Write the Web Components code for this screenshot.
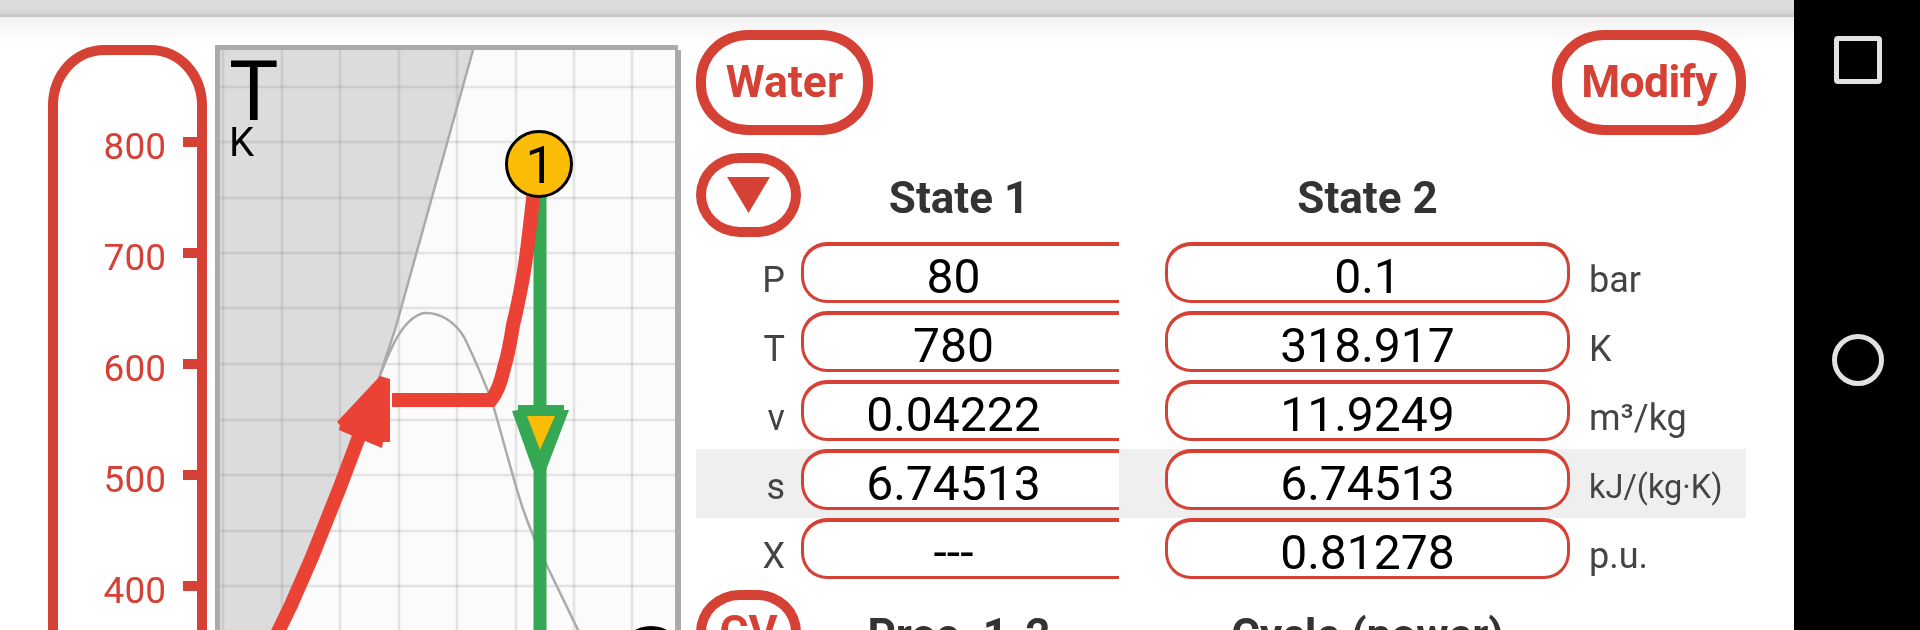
<!DOCTYPE html>
<html><head><meta charset="utf-8">
<style>
html,body{margin:0;padding:0;height:630px;overflow:hidden;background:#fff;font-family:Roboto,sans-serif}
</style></head>
<body>
<app-shell>
  <axis-scale slot="axis"></axis-scale>
  <ts-chart slot="chart"></ts-chart>
  <state-panel slot="panel"></state-panel>
</app-shell>
<script>
const RED='#d54135';
class AppShell extends HTMLElement{constructor(){super();this.attachShadow({mode:'open'}).innerHTML=`<style>
:host{display:flex;width:1920px;height:630px;overflow:hidden;background:#fff}
.main{flex:1;display:flex;flex-direction:column;position:relative;min-width:0}
.bar{height:17px;flex:none;box-sizing:border-box;background:#dcdcdc;border-bottom:2px solid #c6c6c6;background-image:linear-gradient(#dcdcdc 60%,#d0d0d0)}
.shade{position:absolute;left:0;right:0;top:17px;height:26px;background:linear-gradient(#f2f2f2,#ffffff)}
.content{position:relative;flex:1;display:flex;align-items:flex-start;padding:13px 0 0 48px;min-height:0;filter:blur(.45px)}
</style>
<div class="main"><div class="bar"></div><div class="shade"></div>
<div class="content"><slot name="axis"></slot><slot name="chart"></slot><slot name="panel"></slot></div></div>
<nav-rail></nav-rail>`}}
class NavRail extends HTMLElement{constructor(){super();this.attachShadow({mode:'open'}).innerHTML=`<style>
:host{display:flex;flex:none;width:126px;height:630px;background:#000;flex-direction:column;align-items:center;box-sizing:border-box;padding:36px 0 0 1px}
.sq{width:48px;height:48px;box-sizing:border-box;border:5px solid #e2e2e2;border-radius:4px}
.ci{width:52px;height:52px;box-sizing:border-box;border:5px solid #e2e2e2;border-radius:50%;margin-top:250px}
</style><div class="sq"></div><div class="ci"></div>`}}
class AxisScale extends HTMLElement{constructor(){super();const t=[800,700,600,500,400];this.attachShadow({mode:'open'}).innerHTML=`<style>
:host{display:block;flex:none;width:159px;height:640px;margin:15px 8px 0 0;box-sizing:border-box;border:10px solid ${RED};border-bottom:none;border-radius:56px 56px 0 0/60px 60px 0 0;padding-top:31.5px}
.r{height:111px;display:flex;justify-content:flex-end;align-items:center;color:${RED};font:37px/60px Roboto,sans-serif}
.r span{margin-top:10px}
.r i{display:block;width:14px;height:10px;background:${RED};margin-left:17px}
</style>${t.map(v=>`<div class="r"><span>${v}</span><i></i></div>`).join('')}`}}
class TsChart extends HTMLElement{constructor(){super();
const vx=[223,282,340,399,457,516,574,632],hy=[87,142,198,253,308,364,420,475,531,586];
this.attachShadow({mode:'open'}).innerHTML=`<style>
:host{display:block;flex:none;width:466px;height:600px;margin:15px 15px 0 0}
svg{display:block;overflow:visible}
text{font-family:Roboto,sans-serif}
</style>
<svg width="466" height="585" viewBox="215 45 466 585">
<rect x="215" y="45" width="466" height="585" fill="#fbfbfb"/>
<path d="M219 50H473L395 330L380 377L358 440L340 487L312 557L291 605L278 630H219Z" fill="#dcdcdc"/>
<g stroke="#8f8f8f" stroke-opacity=".22" stroke-width="2.500">
${vx.map(x=>`<line x1="${x}" y1="50" x2="${x}" y2="630"/>`).join('')}
${hy.map(y=>`<line x1="219" y1="${y}" x2="675" y2="${y}"/>`).join('')}
</g>
<path d="M473 50L395 330L379 378" fill="none" stroke="#aaa" stroke-width="2.5"/>
<path d="M379 378C390 350 402 318 424 313C440 312 455 322 464 337C478 365 485 385 491 398C502 435 512 475 522 506C530 530 540 552 549 570L580 634" fill="none" stroke="#aaa" stroke-width="2.5"/>
<path d="M217.500 630V47.500H678" fill="none" stroke="#aaa" stroke-width="5"/>
<rect x="675" y="50" width="6" height="580" fill="#aaa"/>
<rect x="533.500" y="164" width="13" height="466" fill="#34a853"/>
<path d="M518 405H564V410H569L546 470H533L512 411L518 410Z" fill="#34a853"/>
<path d="M527 416H555L540 450Z" fill="#fbbc05"/>
<path d="M535 175L533 199C530 225 528 245 525 265C521 290 518 305 513 325C510 345 507 358 504 368C501 382 497 393 491 400H392" fill="none" stroke="#ea4335" stroke-width="14"/>
<path d="M337 422L380 376L390 379V442H383L382 448L353 436L339 430L340 425Z" fill="#ea4335"/>
<path d="M360 434L340 487L312 557L291 605L276 636" fill="none" stroke="#ea4335" stroke-width="14"/>
<circle cx="539" cy="164" r="32.500" fill="#fbbc05" stroke="#000" stroke-width="3"/>
<text x="540" y="183" text-anchor="middle" font-size="52">1</text>
<circle cx="651" cy="660" r="31" fill="#fbbc05" stroke="#000" stroke-width="6"/>
<text x="229" y="120" font-size="83">T</text>
<text x="229" y="156" font-size="40">K</text>
</svg>`}}
class RedBtn extends HTMLElement{constructor(){super();this.attachShadow({mode:'open'}).innerHTML=`<style>
:host{display:inline-flex;box-sizing:border-box;height:var(--h,105px);align-items:center;justify-content:center;border:10px solid ${RED};border-radius:52px/50px;color:${RED};font:700 44.500px/1 Roboto,sans-serif;padding:0 20px;background:transparent}
</style><slot></slot>`}}
class ValueBox extends HTMLElement{constructor(){super();this.attachShadow({mode:'open'}).innerHTML=`<style>
:host{display:block;box-sizing:border-box;height:61px;background:#fff;border:solid ${RED};border-width:4px 3px 3px 3px;border-radius:26px;padding-top:8px;text-align:center;font:48px/46px Roboto,sans-serif;color:#000}
:host([open-end]){border-right:none;border-radius:26px 0 0 26px;padding-right:16px}
</style><slot></slot>`}}
class StateRow extends HTMLElement{
constructor(){super();this.attachShadow({mode:'open'});}
connectedCallback(){const g=n=>this.getAttribute(n);this.shadowRoot.innerHTML=`<style>
:host{display:grid;grid-template-columns:105px 318px 46px 405px 1fr;height:69px}
:host([band]){background:#efefef}
.l{font:36px/51px Roboto,sans-serif;color:#444;text-align:right;padding:13px 16px 0 0}
.u{font:36px/51px Roboto,sans-serif;color:#444;padding:13px 0 0 19px;white-space:nowrap}
:host([small]) .u{font-size:32.500px}
</style><div class="l">${g('label')}</div><value-box open-end>${g('a')}</value-box><div></div><value-box>${g('b')}</value-box><div class="u">${g('unit')}</div>`}}
class StatePanel extends HTMLElement{constructor(){super();this.attachShadow({mode:'open'}).innerHTML=`<style>
:host{display:block;flex:none;width:1050px;color:#333}
.top{display:flex;justify-content:space-between;height:105px;margin-bottom:18px}
.head{display:grid;grid-template-columns:105px 318px 46px 405px 1fr;height:84px;margin-bottom:5px;font:700 44px/51px Roboto,sans-serif}
.head div{padding-top:20px;text-align:center;white-space:nowrap}
.head div.s1{padding-right:2px}
.tri{--h:84px;width:105px;padding:0}
.w{width:177px;padding:0}.m{width:194px;padding:0;letter-spacing:-.6px}
.foot{margin-top:3px}
</style>
<div class="top"><red-btn class="w">Water</red-btn><red-btn class="m">Modify</red-btn></div>
<div class="head"><red-btn class="tri"><svg width="43" height="36" viewBox="0 0 43 36" style="display:block"><path d="M0 0H43L21.500 36Z" fill="${RED}"/></svg></red-btn><div class="s1">State 1</div><div></div><div>State 2</div></div>
<state-row label="P" a="80" b="0.1" unit="bar"></state-row>
<state-row label="T" a="780" b="318.917" unit="K"></state-row>
<state-row label="v" a="0.04222" b="11.9249" unit="m³/kg"></state-row>
<state-row label="s" a="6.74513" b="6.74513" unit="kJ/(kg·K)" band small></state-row>
<state-row label="X" a="---" b="0.81278" unit="p.u."></state-row>
<div class="head foot"><red-btn class="tri">CV</red-btn><div class="s1">Proc. 1-2</div><div></div><div>Cycle (power)</div></div>`}}
customElements.define('value-box',ValueBox);
customElements.define('red-btn',RedBtn);
customElements.define('state-row',StateRow);
customElements.define('state-panel',StatePanel);
customElements.define('axis-scale',AxisScale);
customElements.define('ts-chart',TsChart);
customElements.define('nav-rail',NavRail);
customElements.define('app-shell',AppShell);
</script>
</body></html>
